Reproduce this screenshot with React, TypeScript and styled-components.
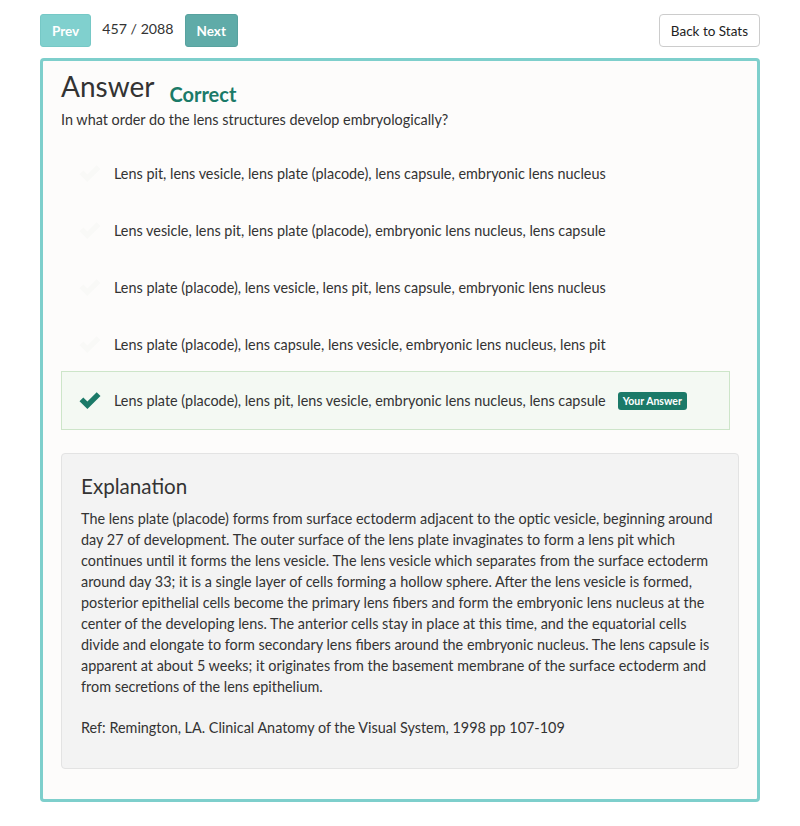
import React from "react";
import styled, { createGlobalStyle } from "styled-components";

const Global = createGlobalStyle`
  html, body { margin: 0; padding: 0; background: #ffffff; }
  body { font-family: Lato, "Open Sans", sans-serif; color: #333333; -webkit-font-smoothing: antialiased; }
  * { box-sizing: border-box; }
`;

const Page = styled.div`
  padding: 14px 40px 24px 40px;
  width: 800px;
`;

const TopBar = styled.div`
  display: flex;
  align-items: center;
  height: 33px;
`;

const NavButton = styled.button<{ $variant: "light" | "dark" }>`
  font-family: Lato, sans-serif;
  font-weight: 700;
  font-size: 13.5px;
  color: #ffffff;
  border: 1px solid ${(p) => (p.$variant === "light" ? "#76c8c6" : "#58a29f")};
  background: ${(p) => (p.$variant === "light" ? "#80d0ce" : "#5faba8")};
  border-radius: 3px;
  height: 33px;
  padding: 0 11px;
  cursor: pointer;
`;

const Counter = styled.span`
  font-size: 14.2px;
  color: #333;
  margin: 0 11px;
  position: relative;
  top: -2px;
`;

const BackButton = styled.button`
  margin-left: auto;
  font-family: Lato, sans-serif;
  font-size: 13.5px;
  color: #222;
  background: #fff;
  border: 1px solid #cccccc;
  border-radius: 4px;
  height: 33px;
  padding: 0 11px;
`;

const Card = styled.div`
  margin-top: 11px;
  border: 3px solid #7ecfcc;
  border-radius: 4px;
  background: #fdfcfb;
  padding: 9px 18px 30px 18px;
`;

const HeaderRow = styled.div`
  display: flex;
  align-items: flex-end;
`;

const Title = styled.h1`
  margin: 0;
  font-size: 28px;
  font-weight: 400;
  line-height: 33px;
  color: #333;
`;

const Status = styled.span`
  font-size: 20px;
  font-weight: 700;
  color: #1b7a68;
  margin-left: 15px;
  line-height: 24px;
  position: relative;
  top: 3px;
`;

const Question = styled.p`
  margin: 7px 0 15px 0;
  font-size: 14.4px;
  line-height: 20px;
`;

const Options = styled.div`
  display: flex;
  flex-direction: column;
  margin-right: 9px;
`;

const Option = styled.div<{ $selected?: boolean }>`
  display: flex;
  align-items: center;
  padding: ${(p) => (p.$selected ? "19px 0 19px 17px" : "18px 0 18px 17px")};
  line-height: 19px;
  font-size: 14.4px;
  border: 1px solid ${(p) => (p.$selected ? "#cde5c9" : "transparent")};
  background: ${(p) => (p.$selected ? "#f4f9f3" : "transparent")};
  margin-top: ${(p) => (p.$selected ? "-2px" : "0")};
`;

const CheckWrap = styled.span<{ $on?: boolean }>`
  width: 22px;
  height: 18px;
  margin-right: 13px;
  display: inline-flex;
  color: ${(p) => (p.$on ? "#1b7a68" : "#f9f9f7")};
`;

const Badge = styled.span`
  display: inline-block;
  margin-left: 12px;
  background: #1b7a68;
  color: #fff;
  font-size: 10.5px;
  font-weight: 700;
  border-radius: 3px;
  padding: 2px 5px;
  line-height: 14px;
`;

const Explanation = styled.div`
  margin-top: 23px;
  background: #f3f3f3;
  border: 1px solid #e3e3e3;
  border-radius: 4px;
  padding: 18px 19px 30px 19px;
`;

const ExplTitle = styled.h3`
  margin: 0 0 8px 0;
  font-size: 20.6px;
  font-weight: 400;
  line-height: 28px;
  color: #333;
`;

const Para = styled.p`
  margin: 0 0 20px 0;
  font-size: 14.4px;
  line-height: 21px;
  &:last-child { margin-bottom: 0; }
`;

const Line = styled.span`
  display: block;
  white-space: nowrap;
`;

const Check = () => (
  <svg width="22" height="18" viewBox="0 0 22 18" fill="currentColor">
    <path d="M0.5 9.2 L4.3 5.4 L8.4 9.5 L17.7 0.2 L21.5 4 L8.4 17.1 Z" />
  </svg>
);

const options = [
  "Lens pit, lens vesicle, lens plate (placode), lens capsule, embryonic lens nucleus",
  "Lens vesicle, lens pit, lens plate (placode), embryonic lens nucleus, lens capsule",
  "Lens plate (placode), lens vesicle, lens pit, lens capsule, embryonic lens nucleus",
  "Lens plate (placode), lens capsule, lens vesicle, embryonic lens nucleus, lens pit",
  "Lens plate (placode), lens pit, lens vesicle, embryonic lens nucleus, lens capsule",
];

const explanation = [
  "The lens plate (placode) forms from surface ectoderm adjacent to the optic vesicle, beginning around",
  "day 27 of development. The outer surface of the lens plate invaginates to form a lens pit which",
  "continues until it forms the lens vesicle. The lens vesicle which separates from the surface ectoderm",
  "around day 33; it is a single layer of cells forming a hollow sphere. After the lens vesicle is formed,",
  "posterior epithelial cells become the primary lens fibers and form the embryonic lens nucleus at the",
  "center of the developing lens. The anterior cells stay in place at this time, and the equatorial cells",
  "divide and elongate to form secondary lens fibers around the embryonic nucleus. The lens capsule is",
  "apparent at about 5 weeks; it originates from the basement membrane of the surface ectoderm and",
  "from secretions of the lens epithelium.",
];

export default function App() {
  return (
    <Page>
      <Global />
      <TopBar>
        <NavButton $variant="light">Prev</NavButton>
        <Counter>457 / 2088</Counter>
        <NavButton $variant="dark">Next</NavButton>
        <BackButton>Back to Stats</BackButton>
      </TopBar>
      <Card>
        <HeaderRow>
          <Title>Answer</Title>
          <Status>Correct</Status>
        </HeaderRow>
        <Question>In what order do the lens structures develop embryologically?</Question>
        <Options>
          {options.map((o, i) => {
            const sel = i === 4;
            return (
              <Option key={i} $selected={sel}>
                <CheckWrap $on={sel}>
                  <Check />
                </CheckWrap>
                <span>{o}</span>
                {sel && <Badge>Your Answer</Badge>}
              </Option>
            );
          })}
        </Options>
        <Explanation>
          <ExplTitle>Explanation</ExplTitle>
          <Para>
            {explanation.map((l, i) => (
              <Line key={i}>{l}</Line>
            ))}
          </Para>
          <Para>Ref: Remington, LA. Clinical Anatomy of the Visual System, 1998 pp 107-109</Para>
        </Explanation>
      </Card>
    </Page>
  );
}
